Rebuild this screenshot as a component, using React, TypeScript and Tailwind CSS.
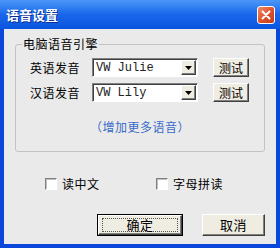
import React from 'react';

const font = { fontFamily: '"Noto Sans CJK SC", "Noto Sans", sans-serif' };

const raised =
  'border border-t-white border-l-white border-r-[#404040] border-b-[#404040] shadow-[inset_-1px_-1px_0_#808080] bg-[#efece2]';

const VoiceSelect: React.FC<{ value: string }> = ({ value }) => (
  <div className="flex h-[19px] w-[106px] border border-t-[#808080] border-l-[#808080] border-r-white border-b-white bg-white shadow-[inset_1px_1px_0_#404040]">
    <div
      className="flex-1 pl-[3px] pt-[1px] text-[12px] leading-[16px] text-[#222]"
      style={{ fontFamily: '"Liberation Mono", monospace' }}
    >
      {value}
    </div>
    <div className={`m-[1px] flex w-[15px] items-center justify-center ${raised}`}>
      <svg width="7" height="4" viewBox="0 0 7 4">
        <polygon points="0,0 7,0 3.5,4" fill="#000" />
      </svg>
    </div>
  </div>
);

const CheckItem: React.FC<{ label: string; className?: string }> = ({ label, className }) => (
  <div className={`flex items-center gap-[5px] ${className ?? ''}`}>
    <div className="h-[12px] w-[12px] border border-t-[#808080] border-l-[#808080] border-r-white border-b-white bg-white shadow-[inset_1px_1px_0_#c0c0c0]" />
    <span className="text-[12px] leading-[14px] tracking-[0.5px] text-black">{label}</span>
  </div>
);

export default function App() {
  return (
    <div className="flex h-[248px] w-[280px] flex-col bg-[#0b47da]" style={font}>
      {/* title bar */}
      <div className="flex h-[29px] items-center justify-between bg-gradient-to-b from-[#4a96f7] via-[#1a66eb] to-[#0a55df] pl-[6px] pr-[5px]">
        <span className="text-[13px] font-bold leading-[16px] text-white [text-shadow:1px_1px_0_#0a2f8f]">
          语音设置
        </span>
        <div className="flex h-[18px] w-[18px] items-center justify-center rounded-[3px] border border-white bg-gradient-to-br from-[#ef8a6a] via-[#e0532c] to-[#c23b17]">
          <svg width="10" height="10" viewBox="0 0 10 10">
            <path d="M1.5 1.5 L8.5 8.5 M8.5 1.5 L1.5 8.5" stroke="#fff" strokeWidth="2" strokeLinecap="round" />
          </svg>
        </div>
      </div>

      {/* body */}
      <div className="mx-[4px] mb-[4px] flex flex-1 flex-col bg-[#eaeaea] px-[11px] pt-[8px]">
        <fieldset className="rounded-[3px] border border-[#c3c3c3] pb-[17px]">
          <legend className="ml-[6px] px-[1px] text-[12px] leading-[14px] tracking-[0.5px] text-black">
            电脑语音引擎
          </legend>
          <div className="flex flex-col gap-[6px] pl-[14px] pt-[7px]">
            <div className="flex items-center">
              <span className="w-[62px] text-[12px] leading-[14px] tracking-[0.5px] text-black">英语发音</span>
              <VoiceSelect value="VW Julie" />
              <button className={`ml-[15px] h-[19px] w-[36px] text-[12px] leading-[14px] text-black ${raised}`}>
                测试
              </button>
            </div>
            <div className="flex items-center">
              <span className="w-[62px] text-[12px] leading-[14px] tracking-[0.5px] text-black">汉语发音</span>
              <VoiceSelect value="VW Lily" />
              <button className={`ml-[15px] h-[19px] w-[36px] text-[12px] leading-[14px] text-black ${raised}`}>
                测试
              </button>
            </div>
          </div>
          <div className="mt-[18px] text-center text-[12px] leading-[14px] tracking-[0.5px] text-[#3a6bc9]">
            （增加更多语音）
          </div>
        </fieldset>

        <div className="mt-[25px] flex items-center pl-[30px]">
          <CheckItem label="读中文" className="w-[111px]" />
          <CheckItem label="字母拼读" />
        </div>

        <div className="mt-[23px] flex justify-end gap-[19px]">
          <button className="h-[22px] w-[86px] border border-black p-0">
            <div className={`flex h-full w-full items-center justify-center ${raised}`}>
              <div className="flex h-[14px] w-[76px] items-center justify-center border border-dotted border-[#555]">
                <span className="text-[13px] leading-[14px] tracking-[0.5px] text-black">确定</span>
              </div>
            </div>
          </button>
          <button className={`h-[22px] w-[63px] text-[13px] leading-[14px] tracking-[0.5px] text-black ${raised}`}>
            取消
          </button>
        </div>
      </div>
    </div>
  );
}
